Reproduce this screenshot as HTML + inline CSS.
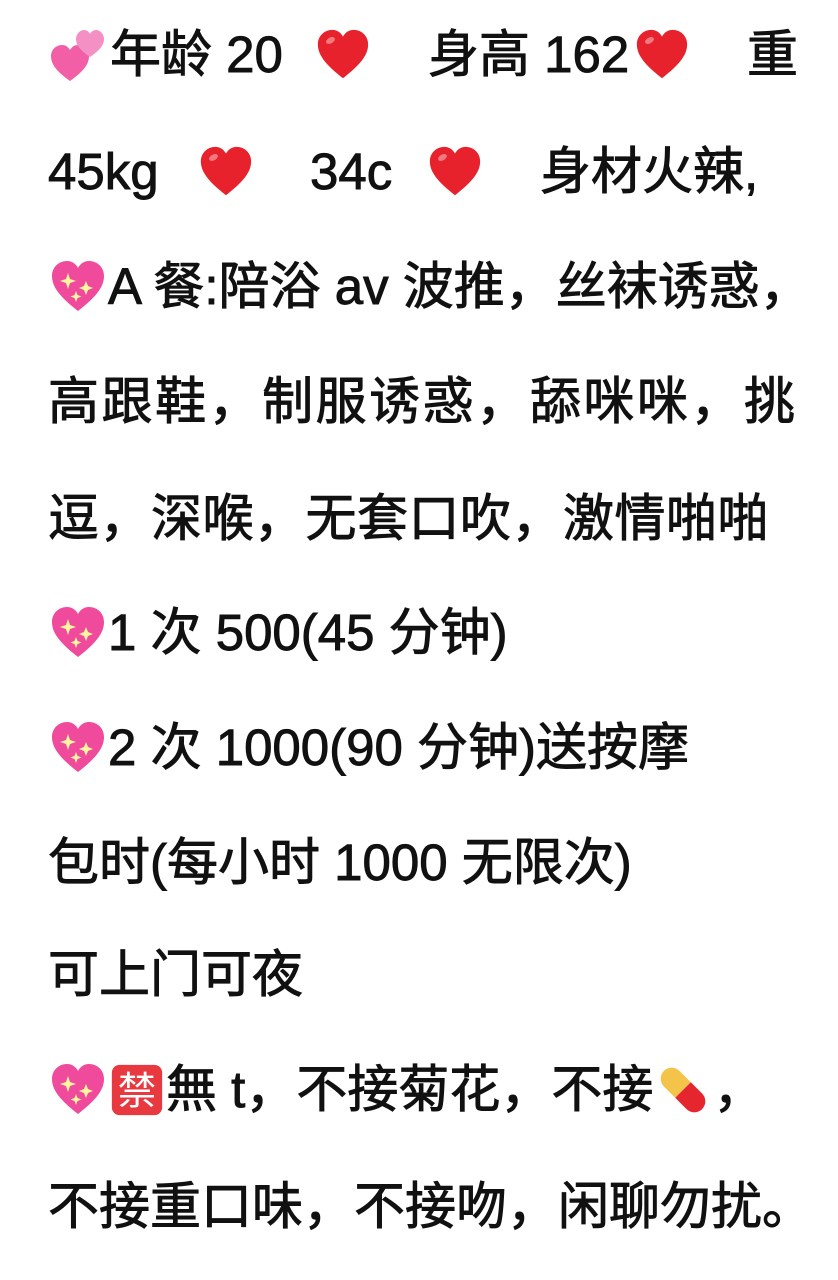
<!DOCTYPE html>
<html><head><meta charset="utf-8"><style>
html,body{margin:0;padding:0;background:#fff;}
body{width:838px;height:1280px;position:relative;overflow:hidden;font-family:"Liberation Sans","Noto Sans CJK SC",sans-serif;font-size:51px;font-weight:400;color:#111;-webkit-text-stroke:0.9px #111;}
.l{position:absolute;left:48px;height:60px;line-height:60px;white-space:nowrap;}
.j{width:747px;text-align:justify;text-align-last:justify;}
.a{position:absolute;top:0;}
svg{display:inline-block;vertical-align:middle;position:relative;top:-4px;-webkit-text-stroke:0;}
</style></head><body>
<svg width="0" height="0" style="position:absolute">
<defs>
<symbol id="heart" viewBox="0 0 60 60"><path d="M30 54C12 40 4 30 4 19 4 10 11 4 19 4c5 0 9 3 11 7 2-4 6-7 11-7 8 0 15 6 15 15 0 11-8 21-26 35z" fill="#e8222c"/><ellipse cx="17" cy="15" rx="5" ry="3" fill="#fff" opacity=".4" transform="rotate(-30 17 15)"/></symbol>
<symbol id="sh" viewBox="0 0 60 60"><path d="M30 54C12 40 4 30 4 19 4 10 11 4 19 4c5 0 9 3 11 7 2-4 6-7 11-7 8 0 15 6 15 15 0 11-8 21-26 35z" fill="#f04a9c"/><path d="M20 16l2 6 6 2-6 2-2 6-2-6-6-2 6-2z M38 24l2 5 5 2-5 2-2 5-2-5-5-2 5-2z M28 34l1.5 4 4 1.5-4 1.5-1.5 4-1.5-4-4-1.5 4-1.5z" fill="#fff6a0"/></symbol>
<symbol id="two" viewBox="0 0 60 60"><path d="M22 56C8 46 3 39 3 31c0-6 5-11 11-11 4 0 6 2 8 5 2-3 4-5 8-5 6 0 11 5 11 11 0 8-5 15-19 25z" fill="#f25fa6"/><path d="M42 32C32 25 28 20 28 14c0-5 4-9 8-9 3 0 5 2 6 4 1-2 3-4 6-4 4 0 8 4 8 9 0 6-4 11-14 18z" fill="#f590c4"/></symbol>
<symbol id="ban" viewBox="0 0 60 60"><rect x="4" y="4" width="52" height="52" rx="8" fill="#e83840"/><text x="30" y="45" font-size="40" text-anchor="middle" fill="#fff" font-family="Noto Sans CJK SC">禁</text></symbol>
<symbol id="pill" viewBox="0 0 60 60"><g transform="rotate(45 30 30)"><path d="M30 19H14a11 11 0 0 0 0 22h16z" fill="#f3c34a"/><path d="M30 19h16a11 11 0 0 1 0 22H30z" fill="#e6262e"/></g></symbol>
</defs></svg>

<div class="l" style="top:25px;left:0;width:838px">
<span class="a" style="left:48px"><svg width="60" height="60"><use href="#two"/></svg></span>
<span class="a" style="left:110px">年龄 20</span>
<span class="a" style="left:314px"><svg width="58" height="58"><use href="#heart"/></svg></span>
<span class="a" style="left:428px">身高 162</span>
<span class="a" style="left:633px"><svg width="58" height="58"><use href="#heart"/></svg></span>
<span class="a" style="left:747px">重</span>
</div>
<div class="l" style="top:142px;left:0;width:838px">
<span class="a" style="left:48px">45kg</span>
<span class="a" style="left:197px"><svg width="58" height="58"><use href="#heart"/></svg></span>
<span class="a" style="left:310px">34c</span>
<span class="a" style="left:426px"><svg width="58" height="58"><use href="#heart"/></svg></span>
<span class="a" style="left:540px">身材火辣,</span>
</div>
<div class="l j" style="top:257px"><svg width="60" height="60"><use href="#sh"/></svg>A 餐:陪浴 av 波推，丝袜诱惑，</div>
<div class="l j" style="top:372px">高跟鞋，制服诱惑，舔咪咪，挑</div>
<div class="l" style="top:489px;letter-spacing:0.5px">逗，深喉，无套口吹，激情啪啪</div>
<div class="l" style="top:603px"><svg width="60" height="60"><use href="#sh"/></svg>1 次 500(45 分钟)</div>
<div class="l" style="top:718px"><svg width="60" height="60"><use href="#sh"/></svg>2 次 1000(90 分钟)送按摩</div>
<div class="l" style="top:833px">包时(每小时 1000 无限次)</div>
<div class="l" style="top:945px">可上门可夜</div>
<div class="l" style="top:1060px"><svg width="60" height="60"><use href="#sh"/></svg><svg width="58" height="58"><use href="#ban"/></svg>無 t，不接菊花，不接<svg width="60" height="60"><use href="#pill"/></svg>，</div>
<div class="l j" style="top:1177px">不接重口味，不接吻，闲聊勿扰。</div>
</body></html>
